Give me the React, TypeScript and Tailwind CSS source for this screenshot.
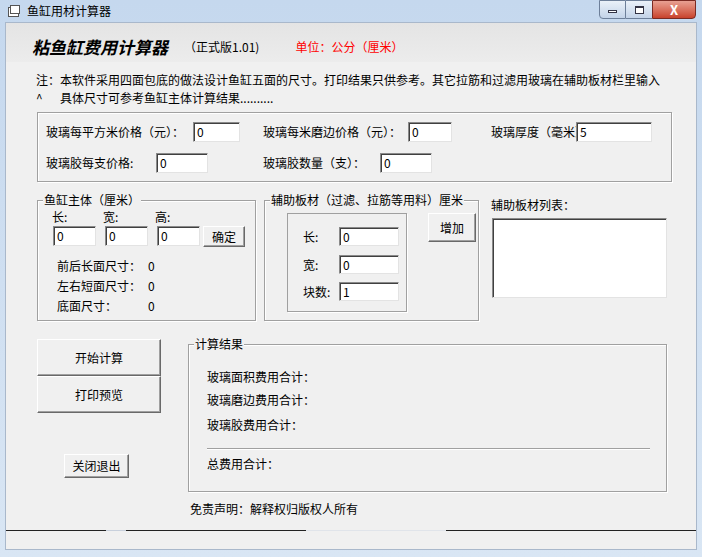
import React from "react";

const font = { fontFamily: '"Noto Sans CJK SC", "Liberation Sans", sans-serif' };

function Input({ v, w, h = 20 }: { v: string; w: number; h?: number }) {
  return (
    <div
      className="bg-white border border-t-[#8a8a8a] border-l-[#8a8a8a] border-b-[#e3e3e3] border-r-[#e3e3e3] shadow-[inset_1px_1px_0_#404040] text-[12px] leading-none flex items-center pl-[3px] text-black shrink-0"
      style={{ width: w, height: h }}
    >
      {v}
    </div>
  );
}

function Btn({ children, w, h, cls = "" }: { children: React.ReactNode; w: number; h: number; cls?: string }) {
  return (
    <div
      className={"bg-[#f0f0f0] border border-t-white border-l-white border-b-[#696969] border-r-[#696969] shadow-[inset_-1px_-1px_0_#a0a0a0] text-[12px] flex items-center justify-center shrink-0 " + cls}
      style={{ width: w, height: h }}
    >
      {children}
    </div>
  );
}

function Group({ title, w, h, children, cls = "" }: { title: string; w: number; h: number; children?: React.ReactNode; cls?: string }) {
  return (
    <div
      className={"relative border border-[#a0a0a0] shadow-[1px_1px_0_white,inset_1px_1px_0_white] shrink-0 " + cls}
      style={{ width: w, height: h }}
    >
      {title && (
        <span className="absolute -top-[9px] left-[5px] bg-[#f0f0f0] px-[1px] text-[12px] leading-[16px] whitespace-nowrap">{title}</span>
      )}
      {children}
    </div>
  );
}

export default function App() {
  return (
    <div className="w-[702px] h-[557px] bg-gradient-to-b from-[#c5d8ee] to-[#d9e6f4] relative text-[#000]" style={font}>
      {/* title bar */}
      <div className="h-[22px] flex items-center pl-[7px] text-[12px]">
        <svg width="14" height="14" viewBox="0 0 14 14" className="mr-[6px]">
          <rect x="1.5" y="3.5" width="10" height="9" fill="#fff" stroke="#555" />
          <rect x="3.5" y="1.5" width="9" height="8" fill="#fff" stroke="#555" />
        </svg>
        <span>鱼缸用材计算器</span>
        <div className="ml-auto flex items-start self-start mr-[6px]">
          <div className="w-[27px] h-[19px] border border-[#6d7f99] rounded-bl-[4px] bg-gradient-to-b from-[#eaf1f9] to-[#c3d3e8] flex items-end justify-center pb-[5px]">
            <div className="w-[9px] h-[3px] bg-white border border-[#334]" />
          </div>
          <div className="w-[26px] h-[19px] border-y border-[#6d7f99] bg-gradient-to-b from-[#eaf1f9] to-[#c3d3e8] flex items-center justify-center">
            <div className="w-[9px] h-[8px] bg-white border border-[#334] border-t-2" />
          </div>
          <div className="w-[44px] h-[19px] border border-[#7a2a22] rounded-br-[4px] bg-gradient-to-b from-[#e8a092] to-[#c8412b] flex items-center justify-center text-white font-bold text-[13px]">
            X
          </div>
        </div>
      </div>
      {/* client */}
      <div className="mx-[5px] h-[528px] bg-[#f0f0f0] border border-[#a9b8cb]">
        <div className="h-[39px] bg-gradient-to-b from-[#e4e4e4] to-[#ececec] flex items-center pl-[26px] pt-[8px]">
          <span className="text-[17px] font-bold italic">粘鱼缸费用计算器</span>
          <span className="text-[12px] ml-[16px]">（正式版1.01)</span>
          <span className="text-[12px] ml-[36px] text-[#ff0000]">单位：公分（厘米）</span>
        </div>
        <div className="pl-[30px] pt-[9px] text-[12px] leading-[18px]">
          <div>注：本软件采用四面包底的做法设计鱼缸五面的尺寸。打印结果只供参考。其它拉筋和过滤用玻璃在辅助板材栏里输入</div>
          <div className="flex"><span className="w-[24px]">^</span>具体尺寸可参考鱼缸主体计算结果..........</div>
        </div>
        <Group title="" w={635} h={70} cls="ml-[31px] mt-[5px]">
          <div className="pl-[8px] pt-[9px] text-[12px] flex flex-col gap-[11px] whitespace-nowrap">
            <div className="flex items-center h-[20px]">
              <div className="flex items-center w-[217px]"><span className="w-[147px]">玻璃每平方米价格（元）：</span><Input v="0" w={47} /></div>
              <div className="flex items-center w-[228px]"><span className="w-[145px]">玻璃每米磨边价格（元）：</span><Input v="0" w={44} /></div>
              <div className="flex items-center"><span className="w-[85px] shrink-0">玻璃厚度（毫米）：</span><Input v="5" w={76} /></div>
            </div>
            <div className="flex items-center h-[20px]">
              <div className="flex items-center w-[217px]"><span className="w-[110px]">玻璃胶每支价格:</span><Input v="0" w={52} /></div>
              <div className="flex items-center"><span className="w-[117px]">玻璃胶数量（支）：</span><Input v="0" w={52} /></div>
            </div>
          </div>
        </Group>
        <div className="flex mt-[18px] ml-[31px] text-[12px]">
          <Group title="鱼缸主体（厘米）" w={219} h={121}>
            <div className="pl-[14px] pt-[8px]">
              <div className="flex h-[16px] leading-[16px]">
                <span className="w-[51px]">长:</span><span className="w-[52px]">宽:</span><span>高:</span>
              </div>
              <div className="flex items-start mt-[1px] pl-[1px]">
                <Input v="0" w={43} />
                <div className="w-[9px]" />
                <Input v="0" w={43} />
                <div className="w-[9px]" />
                <Input v="0" w={43} />
                <div className="w-[3px]" />
                <Btn w={42} h={21}>确定</Btn>
              </div>
              <div className="mt-[9px] pl-[5px] leading-[20px]">
                <div className="flex"><span className="w-[91px]">前后长面尺寸：</span>0</div>
                <div className="flex"><span className="w-[91px]">左右短面尺寸：</span>0</div>
                <div className="flex"><span className="w-[91px]">底面尺寸：</span>0</div>
              </div>
            </div>
          </Group>
          <Group title="辅助板材（过滤、拉筋等用料）厘米" w={215} h={121} cls="ml-[8px]">
            <div className="flex items-start pl-[22px] pt-[12px]">
              <div className="w-[120px] h-[99px] border border-[#a0a0a0] shadow-[1px_1px_0_white] flex flex-col gap-[9px] pt-[13px] pl-[15px]">
                <div className="flex items-center"><span className="w-[36px]">长:</span><Input v="0" w={60} h={19} /></div>
                <div className="flex items-center"><span className="w-[36px]">宽:</span><Input v="0" w={60} h={19} /></div>
                <div className="flex items-center -mt-[1px]"><span className="w-[36px]">块数:</span><Input v="1" w={60} h={19} /></div>
              </div>
              <Btn w={48} h={29} cls="ml-[21px]">增加</Btn>
            </div>
          </Group>
          <div className="ml-[12px] -mt-[3px]">
            <div className="leading-[16px] h-[16px]">辅助板材列表：</div>
            <div className="mt-[5px] ml-[1px] w-[175px] h-[80px] bg-white border border-t-[#8a8a8a] border-l-[#8a8a8a] border-b-[#e3e3e3] border-r-[#e3e3e3] shadow-[inset_1px_1px_0_#404040]" />
          </div>
        </div>
        <div className="flex mt-[18px] ml-[31px] text-[12px]">
          <div className="w-[123px] flex flex-col">
            <Btn w={124} h={37}>开始计算</Btn>
            <Btn w={124} h={37}>打印预览</Btn>
            <Btn w={65} h={24} cls="ml-[27px] mt-[41px]">关闭退出</Btn>
          </div>
          <div className="ml-[28px] mt-[5px]">
            <Group title="计算结果" w={479} h={148}>
              <div className="pl-[18px] pt-[24px] leading-[16px]">
                <div>玻璃面积费用合计：</div>
                <div className="mt-[7px]">玻璃磨边费用合计：</div>
                <div className="mt-[9px]">玻璃胶费用合计：</div>
                <div className="mt-[15px] w-[443px] h-[2px] border-t border-[#a0a0a0] border-b border-b-white" />
                <div className="mt-[6px]">总费用合计：</div>
              </div>
            </Group>
            <div className="mt-[9px] ml-[2px] leading-[16px]">免责声明：解释权归版权人所有</div>
          </div>
        </div>
        <div className="mt-[13px] flex h-[1px]">
          <div className="w-[100px] bg-[#222]" />
          <div className="w-[20px] bg-[#c8d0dc]" />
          <div className="w-[180px] bg-[#222]" />
          <div className="w-[140px] bg-[#e0e4ea]" />
          <div className="flex-1 bg-[#222]" />
        </div>
      </div>
    </div>
  );
}
